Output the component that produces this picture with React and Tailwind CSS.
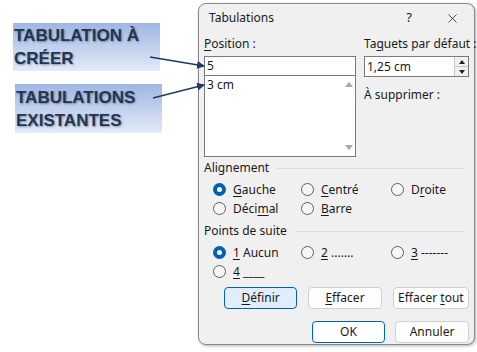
import { X } from 'lucide-react'

const ui = { fontFamily: '"Noto Sans", "Open Sans", sans-serif' }

function U({ children }) {
  return <span className="underline underline-offset-2">{children}</span>
}

function Radio({ checked, children, className = '' }) {
  return (
    <label className={`flex items-center gap-[7px] h-[19px] ${className}`}>
      {checked ? (
        <span className="flex items-center justify-center w-[13px] h-[13px] rounded-full bg-[#005fb8]">
          <span className="w-[5px] h-[5px] rounded-full bg-white" />
        </span>
      ) : (
        <span className="w-[13px] h-[13px] rounded-full border border-[#5f5f5f] bg-[#f7f7f7]" />
      )}
      <span>{children}</span>
    </label>
  )
}

function Group({ title, children }) {
  return (
    <div>
      <div className="flex items-center gap-[8px] h-[18px]">
        <span>{title}</span>
        <div className="flex-1 h-px bg-[#d9d9d9] mr-[5px]" />
      </div>
      <div className="pl-[9px] pt-[3px]">{children}</div>
    </div>
  )
}

function Btn({ primary, selected, className = '', children }) {
  return (
    <button
      className={`h-[22px] rounded-[4px] border text-[12px] ${
        selected
          ? 'bg-[#e0eef9] border-[#005fb8]'
          : primary
          ? 'bg-white border-[#005fb8]'
          : 'bg-[#fdfdfd] border-[#d0d0d0]'
      } ${className}`}
    >
      {children}
    </button>
  )
}

function Callout({ lines, className }) {
  return (
    <div
      className={`w-[147px] h-[48px] bg-gradient-to-b from-[#9fb6e3] to-[#e4eaf7] pl-[1px] text-[17px] font-bold leading-[23px] text-[#1f3654] [text-shadow:1px_1px_2px_rgba(0,0,0,0.35)] ${className}`}
      style={{ fontFamily: '"Liberation Sans", Arial, sans-serif' }}
    >
      {lines.map(l => (
        <div key={l}>{l}</div>
      ))}
    </div>
  )
}

export default function App() {
  return (
    <div className="relative w-[477px] h-[352px] bg-white overflow-hidden">
      <div className="flex pt-[3px]">
        <div className="w-[198px] shrink-0">
          <Callout lines={['TABULATION À', 'CRÉER']} className="ml-[13px] mt-[20px] pt-[1px]" />
          <Callout lines={['TABULATIONS', 'EXISTANTES']} className="ml-[15px] mt-[13px] h-[49px] pt-[2px]" />
        </div>

        <div
          className="w-[277px] h-[342px] rounded-[8px] border border-[#8a8a8a] bg-[#f0f0f0] text-[12px] text-[#1a1a1a] shadow-[1px_1px_3px_rgba(0,0,0,0.3)]"
          style={ui}
        >
          <div className="flex items-center h-[28px] pl-[10px] pr-[10px]">
            <span className="flex-1">Tabulations</span>
            <span className="w-[20px] text-center mr-[26px] text-[13px]">?</span>
            <X size={15} strokeWidth={1.2} className="mr-[4px]" />
          </div>

          <div className="px-[5px] pt-[2px]">
            <div className="flex gap-[8px]">
              <div className="w-[153px]">
                <div className="h-[20px] leading-[20px]"><U>P</U>osition :</div>
                <div className="h-[20px] mt-[2px] border border-[#7a7a7a] bg-white pl-[2px] leading-[18px]">5</div>
                <div className="flex h-[81px] border border-[#7a7a7a] border-t-0 bg-white">
                  <div className="flex-1 pl-[2px] leading-[18px]">3 cm</div>
                  <div className="flex flex-col justify-between items-center w-[13px] py-[6px]">
                    <span className="w-0 h-0 border-x-[4px] border-x-transparent border-b-[5px] border-b-[#a8a8a8]" />
                    <span className="w-0 h-0 border-x-[4px] border-x-transparent border-t-[5px] border-t-[#a8a8a8]" />
                  </div>
                </div>
              </div>
              <div className="w-[105px]">
                <div className="h-[20px] leading-[20px] whitespace-nowrap">Ta<U>q</U>uets par défaut :</div>
                <div className="flex h-[21px] mt-[2px] border border-[#7a7a7a] bg-white">
                  <div className="flex-1 pl-[2px] leading-[19px]">1,25 cm</div>
                  <div className="flex flex-col w-[14px] border-l border-[#c8c8c8]">
                    <div className="flex-1 flex items-center justify-center border-b border-[#c8c8c8] bg-[#f0f0f0]">
                      <span className="w-0 h-0 border-x-[3px] border-x-transparent border-b-[4px] border-b-[#222]" />
                    </div>
                    <div className="flex-1 flex items-center justify-center bg-[#f0f0f0]">
                      <span className="w-0 h-0 border-x-[3px] border-x-transparent border-t-[4px] border-t-[#222]" />
                    </div>
                  </div>
                </div>
                <div className="mt-[9px]">À supprimer :</div>
              </div>
            </div>

            <div className="mt-[2px]">
              <Group title="Alignement">
                <div className="grid grid-cols-[88px_90px_auto]">
                  <Radio checked><U>G</U>auche</Radio>
                  <Radio><U>C</U>entré</Radio>
                  <Radio>D<U>r</U>oite</Radio>
                  <Radio>Déci<U>m</U>al</Radio>
                  <Radio><U>B</U>arre</Radio>
                </div>
              </Group>
            </div>

            <div className="mt-[4px]">
              <Group title="Points de suite">
                <div className="grid grid-cols-[88px_90px_auto]">
                  <Radio checked><U>1</U> Aucun</Radio>
                  <Radio><U>2</U> .......</Radio>
                  <Radio><U>3</U> -------</Radio>
                  <Radio><U>4</U> ____</Radio>
                </div>
              </Group>
            </div>

            <div className="flex gap-[11px] pl-[20px] mt-[6px]">
              <Btn selected className="w-[74px]"><U>D</U>éfinir</Btn>
              <Btn className="w-[74px]"><U>E</U>ffacer</Btn>
              <Btn className="w-[77px]">Effacer <U>t</U>out</Btn>
            </div>

            <div className="flex gap-[10px] pl-[108px] mt-[12px]">
              <Btn primary className="w-[73px]">OK</Btn>
              <Btn className="w-[74px]">Annuler</Btn>
            </div>
          </div>
        </div>
      </div>

      <svg className="absolute left-0 top-0 pointer-events-none" width="477" height="352">
        <defs>
          <marker id="ah" markerWidth="8" markerHeight="8" refX="7" refY="4" orient="auto" markerUnits="userSpaceOnUse">
            <path d="M0,0 L8,4 L0,8 Z" fill="#1f3864" />
          </marker>
        </defs>
        <line x1="150" y1="57" x2="204" y2="66" stroke="#1f3864" strokeWidth="1.3" markerEnd="url(#ah)" />
        <line x1="153" y1="98" x2="204" y2="85" stroke="#1f3864" strokeWidth="1.3" markerEnd="url(#ah)" />
      </svg>
    </div>
  )
}
